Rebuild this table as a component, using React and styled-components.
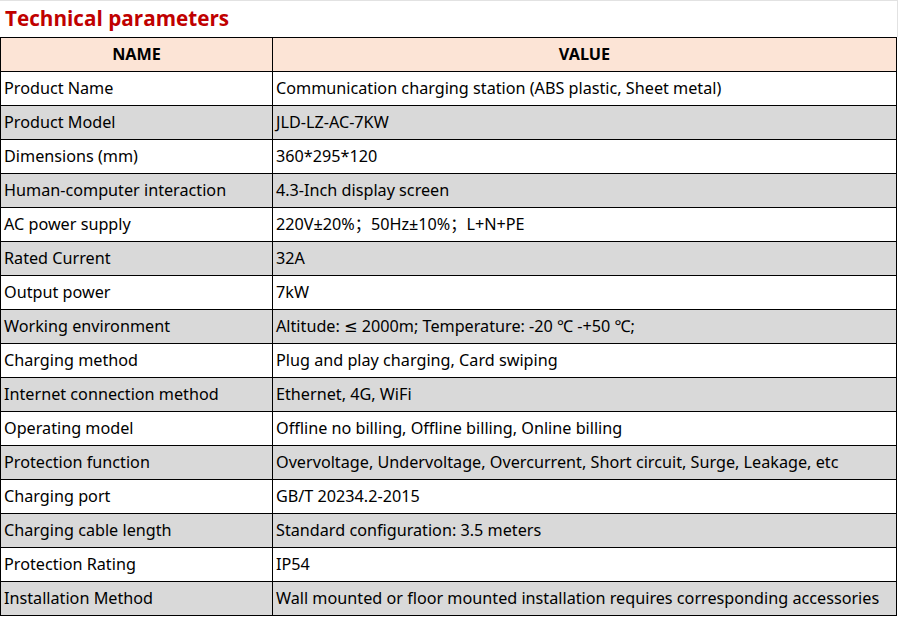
import styled, { createGlobalStyle } from "styled-components";

const GlobalStyle = createGlobalStyle`
  html, body {
    margin: 0;
    padding: 0;
    background: #ffffff;
  }
  body {
    font-family: "Noto Sans", "DejaVu Sans", "Noto Sans CJK SC", sans-serif;
    color: #000000;
  }
`;

const params = [
  ["Product Name", "Communication charging station (ABS plastic, Sheet metal)"],
  ["Product Model", "JLD-LZ-AC-7KW"],
  ["Dimensions (mm)", "360*295*120"],
  ["Human-computer interaction", "4.3-Inch display screen"],
  ["AC power supply", "220V±20%；50Hz±10%；L+N+PE"],
  ["Rated Current", "32A"],
  ["Output power", "7kW"],
  ["Working environment", "Altitude: ≤ 2000m; Temperature: -20 ℃ -+50 ℃;"],
  ["Charging method", "Plug and play charging, Card swiping"],
  ["Internet connection method", "Ethernet, 4G, WiFi"],
  ["Operating model", "Offline no billing, Offline billing, Online billing"],
  ["Protection function", "Overvoltage, Undervoltage, Overcurrent, Short circuit, Surge, Leakage, etc"],
  ["Charging port", "GB/T 20234.2-2015"],
  ["Charging cable length", "Standard configuration: 3.5 meters"],
  ["Protection Rating", "IP54"],
  ["Installation Method", "Wall mounted or floor mounted installation requires corresponding accessories"],
];

export default function App() {
  return (
    <>
      <GlobalStyle />
      <Page>
        <TitleBar>
          <Title>Technical parameters</Title>
        </TitleBar>
        <Table>
          <colgroup>
            <col style={{ width: 272 }} />
            <col />
          </colgroup>
          <thead>
            <tr>
              <Head>NAME</Head>
              <Head>VALUE</Head>
            </tr>
          </thead>
          <tbody>
            {params.map(([name, value], idx) => (
              <Row key={idx} $shaded={idx % 2 === 1}>
                <Cell>{name}</Cell>
                <Cell>{value}</Cell>
              </Row>
            ))}
          </tbody>
        </Table>
      </Page>
    </>
  );
}

const Page = styled.div`
  width: 898px;
  height: 617px;
  overflow: hidden;
`;

const TitleBar = styled.div`
  box-sizing: border-box;
  width: 898px;
  height: 37px;
  border-top: 1px solid #e2e2e2;
  border-right: 1px solid #e2e2e2;
  padding: 0 0 3px 5px;
  display: flex;
  align-items: center;
`;

const Title = styled.h1`
  margin: 0;
  font-family: "Open Sans", "Noto Sans", sans-serif;
  font-size: 20.7px;
  line-height: 28px;
  font-weight: 700;
  color: #c00000;
`;

const Table = styled.table`
  width: 897px;
  table-layout: fixed;
  border-collapse: collapse;
  font-size: 16.2px;
  line-height: 20px;
`;

const Head = styled.th`
  box-sizing: border-box;
  height: 34px;
  padding: 0 0 2px;
  background: #fce4d6;
  border: 1px solid #000000;
  font-weight: 700;
  text-align: center;
`;

const Row = styled.tr`
  height: 34px;
  background: ${(p) => (p.$shaded ? "#d9d9d9" : "#ffffff")};
`;

const Cell = styled.td`
  box-sizing: border-box;
  height: 34px;
  padding: 0 0 2px 3px;
  border: 1px solid #000000;
  white-space: nowrap;
  overflow: hidden;
  text-align: left;
`;
